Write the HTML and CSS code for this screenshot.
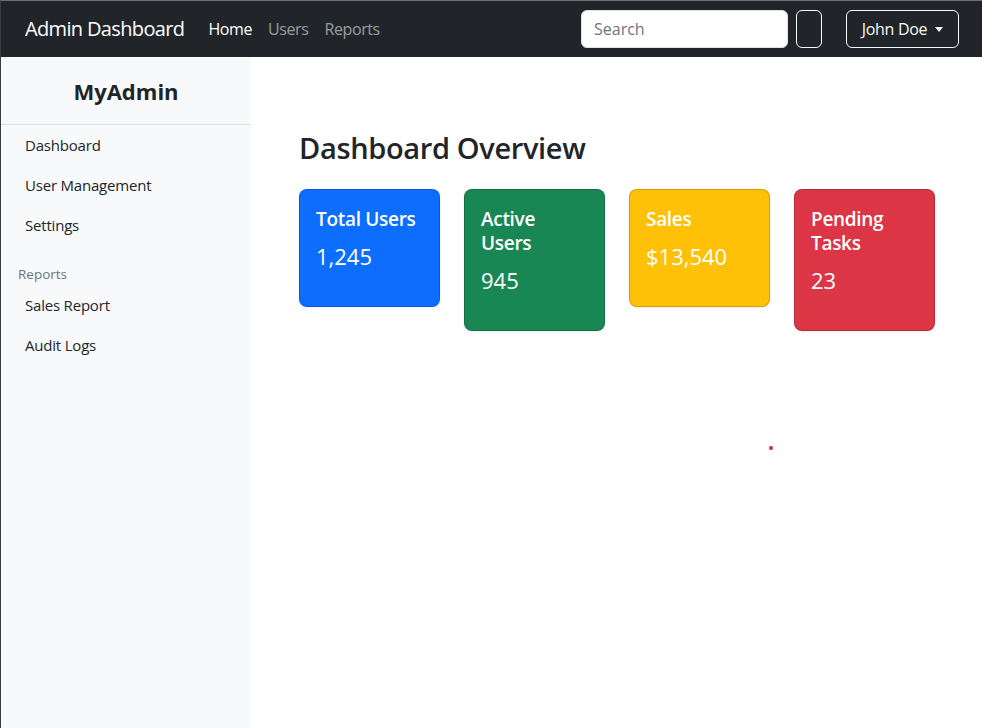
FILE: index.html
```html
<!DOCTYPE html>
<html lang="en">
<head>
<meta charset="utf-8">
<title>Admin Dashboard</title>
<link rel="stylesheet" href="styles.css">
</head>
<body>
<nav class="navbar">
  <a class="brand" href="#">Admin Dashboard</a>
  <ul class="nav-links">
    <li><a class="active" href="#">Home</a></li>
    <li><a href="#">Users</a></li>
    <li><a href="#">Reports</a></li>
  </ul>
  <form class="search">
    <input class="search-input" type="search" placeholder="Search">
    <button class="btn-outline btn-empty" type="button"></button>
  </form>
  <button class="btn-outline user" type="button">John Doe <span class="caret"></span></button>
</nav>
<div class="layout">
  <aside class="sidebar">
    <div class="side-head">MyAdmin</div>
    <ul class="side-nav">
      <li><a href="#">Dashboard</a></li>
      <li><a href="#">User Management</a></li>
      <li><a href="#">Settings</a></li>
    </ul>
    <div class="side-label">Reports</div>
    <ul class="side-nav">
      <li><a href="#">Sales Report</a></li>
      <li><a href="#">Audit Logs</a></li>
    </ul>
  </aside>
  <main class="main">
    <h2 class="title">Dashboard Overview</h2>
    <div class="cards">
      <div class="card blue"><h5>Total Users</h5><p>1,245</p></div>
      <div class="card green"><h5>Active Users</h5><p>945</p></div>
      <div class="card yellow"><h5>Sales</h5><p>$13,540</p></div>
      <div class="card red"><h5>Pending Tasks</h5><p>23</p></div>
    </div>
    <span class="dot"></span>
  </main>
</div>
</body>
</html>
```
FILE: styles.css
```css
* { box-sizing: border-box; }
html, body { margin: 0; height: 100%; }
body {
  font-family: "Open Sans", "Noto Sans", sans-serif;
  font-size: 16px;
  line-height: 1.5;
  color: #212529;
  background: #fff;
  display: flex;
  flex-direction: column;
  border-top: 1px solid #6b6e72;
  border-left: 1px solid #3a3d41;
}
a { text-decoration: none; }
.navbar {
  background: #212529;
  height: 56px;
  display: flex;
  align-items: center;
  padding: 0 23px 0 24px;
  flex-shrink: 0;
}
.brand {
  color: #fff;
  font-size: 20px;
  margin-right: 16px;
  letter-spacing: -0.65px;
}
.nav-links {
  list-style: none;
  display: flex;
  margin: 0;
  padding: 0;
  flex: 1;
}
.nav-links a {
  display: block;
  padding: 8px;
  color: rgba(255,255,255,.55);
  letter-spacing: -0.4px;
}
.nav-links a.active { color: #fff; }
.search { display: flex; gap: 8px; margin-right: 24px; }
.search-input {
  width: 207px;
  height: 38px;
  border: 1px solid #dee2e6;
  border-radius: 6px;
  padding: 6px 12px;
  font: inherit;
  color: #212529;
  background: #fff;
}
.search-input::placeholder { color: #6c757d; }
.btn-outline {
  height: 38px;
  background: transparent;
  border: 1px solid #f8f9fa;
  border-radius: 6px;
  color: #f8f9fa;
  font: inherit;
  padding: 6px 12px;
}
.btn-empty { width: 26px; padding: 0; }
.user { width: 113px; display: flex; align-items: center; justify-content: center; gap: 8px; padding: 0; letter-spacing: -0.3px; }
.caret {
  width: 0; height: 0;
  border-left: 4px solid transparent;
  border-right: 4px solid transparent;
  border-top: 5px solid #f8f9fa;
}
.layout { flex: 1; display: flex; min-height: 0; }
.sidebar {
  width: 250px;
  background: #f8f9fa;
  flex-shrink: 0;
}
.side-head {
  text-align: center;
  font-size: 22px;
  font-weight: 700;
  padding: 19px 16px 18px;
  border-bottom: 1px solid #dee2e6;
  line-height: 30px;
}
.side-nav { list-style: none; margin: 0; padding: 0; }
.side-nav a {
  display: block;
  padding: 8px 24px;
  color: #212529;
  font-size: 15px;
  line-height: 24px;
  letter-spacing: -0.2px;
}
.side-label {
  font-size: 13.5px;
  color: #6c757d;
  padding: 19px 17px 0;
  line-height: 21px;
}
.main {
  flex: 1;
  padding: 73px 47px 0 48px;
  position: relative;
}
.title {
  font-size: 29px;
  font-weight: 600;
  margin: 0 0 23px;
  line-height: 36px;
  letter-spacing: -0.35px;
}
.cards {
  display: grid;
  grid-template-columns: repeat(4, 1fr);
  gap: 24px;
  align-items: start;
}
.card {
  border: 1px solid rgba(0,0,0,.175);
  border-radius: 8px;
  color: #fff;
  padding: 17px 16px 18px;
  box-shadow: 0 1px 3px rgba(0,0,0,.08);
}
.card h5 {
  margin: 0 0 9px;
  font-size: 19px;
  font-weight: 600;
  line-height: 24px;
  letter-spacing: -0.3px;
}
.card p {
  margin: 0 0 16px;
  font-size: 22px;
  line-height: 32px;
}
.blue { background: #0d6efd; }
.green { background: #198754; }
.yellow { background: #ffc107; }
.red { background: #dc3545; }
.dot {
  position: absolute;
  left: 518px;
  top: 389px;
  width: 4px;
  height: 4px;
  border-radius: 50%;
  background: #e0242f;
}
```
